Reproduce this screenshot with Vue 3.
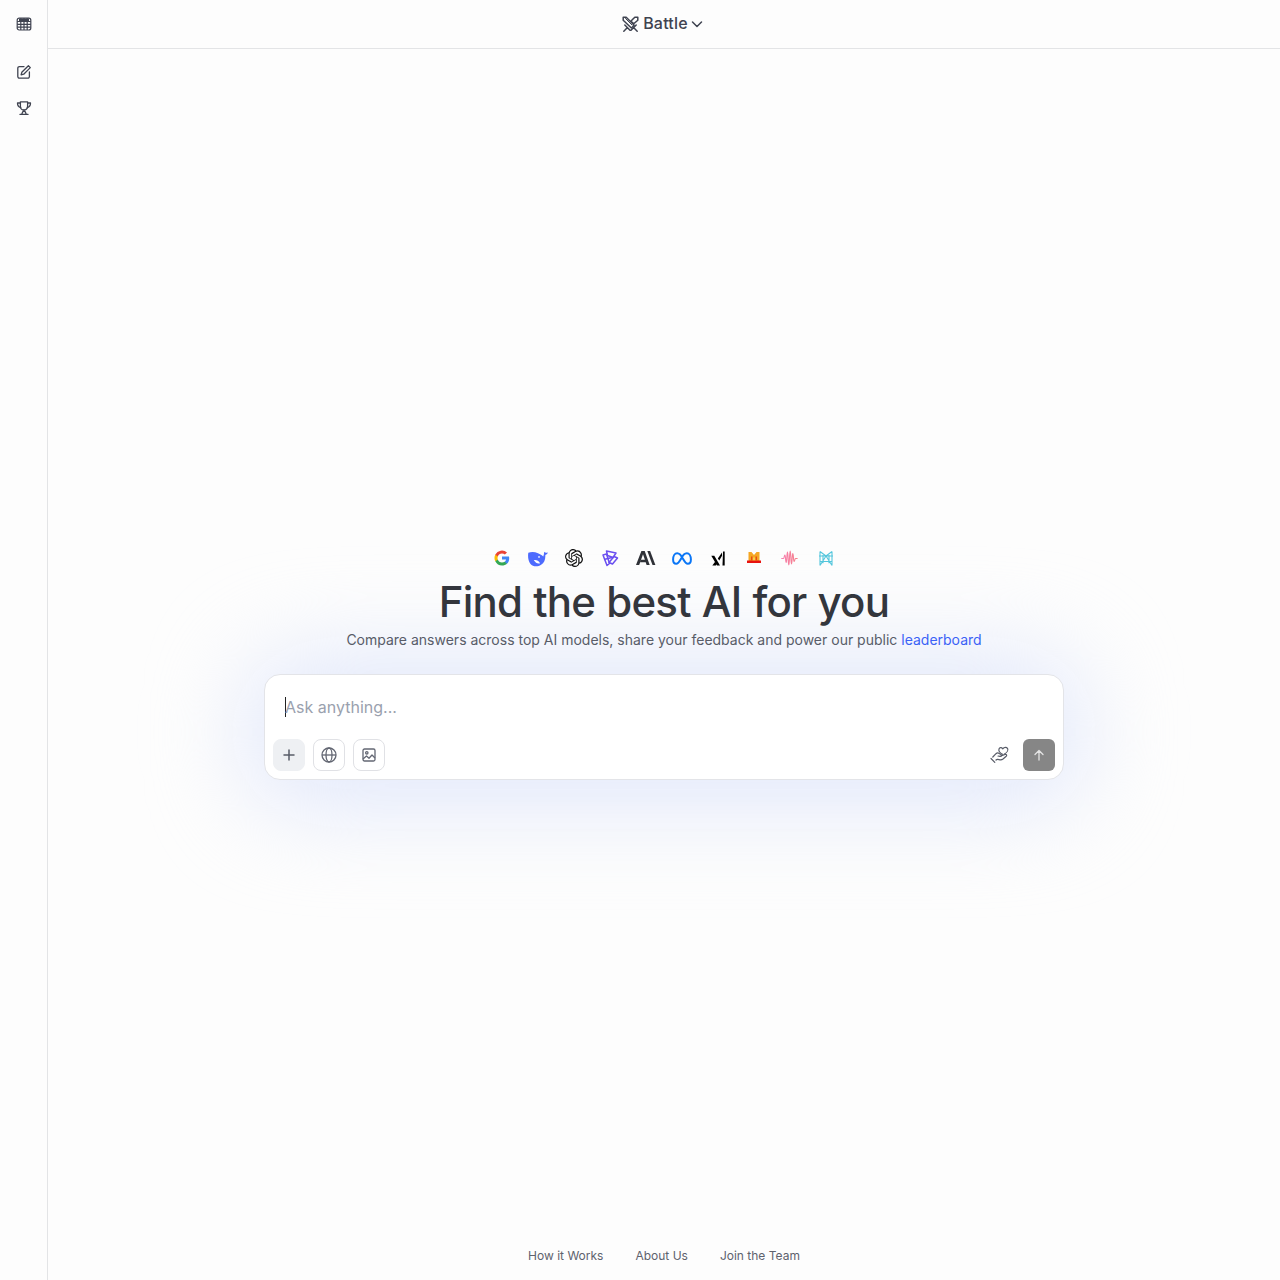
<script setup>
const links = ['How it Works', 'About Us', 'Join the Team']
</script>

<template>
  <div class="page">
    <aside class="side">
      <button class="side-btn top">
        <svg width="16" height="16" viewBox="0 0 16 16" fill="none" stroke="#3f4350" stroke-width="1.2">
          <rect x="1.2" y="2.2" width="13.6" height="11.8" rx="2" />
          <path d="M1.2 5.500h13.600M1.200 8.300h13.600M1.200 11.100h13.600M4.800 2.200V14M8 2.200V14M11.200 2.200V14" />
          <path d="M3 2.600h10v2.400H3z" fill="#3f4350" stroke="none" />
        </svg>
      </button>
      <div class="side-group">
        <button class="side-btn">
          <svg width="16" height="16" viewBox="0 0 16 16" fill="none" stroke="#3f4350" stroke-width="1.300" stroke-linecap="round" stroke-linejoin="round">
            <path d="M8 2.600H3.400a1.600 1.600 0 0 0-1.600 1.600v8.400a1.600 1.600 0 0 0 1.600 1.600h8.400a1.600 1.600 0 0 0 1.600-1.600V8" />
            <path d="M12.400 1.700l1.900 1.900-6.600 6.600-2.600.7.700-2.600z" />
          </svg>
        </button>
        <button class="side-btn">
          <svg width="16" height="16" viewBox="0 0 16 16" fill="none" stroke="#3f4350" stroke-width="1.300" stroke-linecap="round" stroke-linejoin="round">
            <path d="M4.400 1.800h7.200v4.600a3.600 3.600 0 0 1-7.200 0z" />
            <path d="M4.400 3H1.500c0 2.500 1 4 3.200 4.500M11.600 3h2.900c0 2.500-1 4-3.200 4.500" />
            <path d="M8 10v1.600M6.900 11.600l-1.200 2.600M9.100 11.600l1.200 2.600M4 14.400h8" />
          </svg>
        </button>
      </div>
    </aside>

    <div class="main">
      <header class="head">
        <div class="mode">
          <svg width="17" height="17" viewBox="0 0 17 17" fill="none" stroke="#3f4350" stroke-width="1.500" stroke-linecap="round" stroke-linejoin="round">
            <path d="M1.200 1.200h3l8 8-2.800 2.800-8.200-7.800z" />
            <path d="M15.800 1.200h-3L9 5l2.700 2.700 4.100-3.500z" />
            <path d="M2.800 9l5.200 5.200M14.200 9L9 14.200M5.200 11.800l-3.400 3.400M11.800 11.800l3.400 3.400" />
            <path d="M3.500 2.500l6.500 6.500" stroke-width="1" />
          </svg>
          <span class="mode-name">Battle</span>
          <svg width="12" height="12" viewBox="0 0 12 12" fill="none" stroke="#3f4350" stroke-width="1.500" stroke-linecap="round" stroke-linejoin="round">
            <path d="M1.500 4l4.500 4.500L10.500 4" />
          </svg>
        </div>
      </header>

      <main class="center">
        <div class="logos">
          <span class="logo">
            <svg width="16" height="16" viewBox="0 0 16 16">
              <path d="M15.200 8.200c0-.6-.1-1.100-.2-1.600H8v3h4.100a3.500 3.500 0 0 1-1.500 2.300v1.900H13c1.400-1.300 2.200-3.200 2.200-5.600z" fill="#4285f4" />
              <path d="M8 15.500c2 0 3.700-.7 5-1.800l-2.400-1.900c-.7.500-1.500.7-2.600.7-2 0-3.600-1.300-4.200-3.100H1.300v1.900a7.500 7.500 0 0 0 6.700 4.200z" fill="#34a853" />
              <path d="M3.800 9.400a4.500 4.500 0 0 1 0-2.900V4.600H1.300a7.500 7.500 0 0 0 0 6.700z" fill="#fbbc05" />
              <path d="M8 3.500c1.100 0 2.100.4 2.900 1.100L13 2.500A7.500 7.500 0 0 0 1.300 4.600l2.500 1.900C4.400 4.800 6 3.500 8 3.500z" fill="#ea4335" />
            </svg>
          </span>
          <span class="logo">
            <svg width="21" height="17" viewBox="0 0 20 16">
              <path d="M.3 2.500C3 1.500 6.500 1.500 9.500 3c2 1 3.800 1.800 5 3.200.6-1.500.9-3 .8-4.700.7.700 1.700 1 3.700.9-.4 1-1.100 1.800-2.500 2.300.2 4-1 7.300-4 9.300-3.300 2.200-7.800 2-10.300-1C.2 10.300-.3 6 .3 2.500z" fill="#4d6bfe" />
              <path d="M5.500 9.500c2.500-.5 4.500.5 6 3-1.800.6-4.300.2-6-3z" fill="#fff" />
              <circle cx="10.500" cy="6.500" r=".8" fill="#fff" />
            </svg>
          </span>
          <span class="logo">
            <svg width="18" height="18" viewBox="0 0 24 24" fill="#111">
              <path d="M22.2819 9.8211a5.9847 5.9847 0 0 0-.5157-4.9108 6.0462 6.0462 0 0 0-6.5098-2.9A6.0651 6.0651 0 0 0 4.9807 4.1818a5.9847 5.9847 0 0 0-3.9977 2.9 6.0462 6.0462 0 0 0 .7427 7.0966 5.98 5.98 0 0 0 .511 4.9107 6.051 6.051 0 0 0 6.5146 2.9001A5.9847 5.9847 0 0 0 13.2599 24a6.0557 6.0557 0 0 0 5.7718-4.2058 5.9894 5.9894 0 0 0 3.9977-2.9001 6.0557 6.0557 0 0 0-.7475-7.0729zm-9.022 12.6081a4.4755 4.4755 0 0 1-2.8764-1.0408l.1419-.0804 4.7783-2.7582a.7948.7948 0 0 0 .3927-.6813v-6.7369l2.02 1.1686a.071.071 0 0 1 .038.052v5.5826a4.504 4.504 0 0 1-4.4945 4.4944zm-9.6607-4.1254a4.4708 4.4708 0 0 1-.5346-3.0137l.142.0852 4.783 2.7582a.7712.7712 0 0 0 .7806 0l5.8428-3.3685v2.3324a.0804.0804 0 0 1-.0332.0615L9.74 19.9502a4.4992 4.4992 0 0 1-6.1408-1.6464zM2.3408 7.8956a4.485 4.485 0 0 1 2.3655-1.9728V11.6a.7664.7664 0 0 0 .3879.6765l5.8144 3.3543-2.0201 1.1685a.0757.0757 0 0 1-.071 0l-4.8303-2.7865A4.504 4.504 0 0 1 2.3408 7.872zm16.5963 3.8558L13.1038 8.364 15.1192 7.2a.0757.0757 0 0 1 .071 0l4.8303 2.7913a4.4944 4.4944 0 0 1-.6765 8.1042v-5.6772a.79.79 0 0 0-.407-.667zm2.0107-3.0231l-.142-.0852-4.7735-2.7818a.7759.7759 0 0 0-.7854 0L9.409 9.2297V6.8974a.0662.0662 0 0 1 .0284-.0615l4.8303-2.7866a4.4992 4.4992 0 0 1 6.6802 4.66zM8.3065 12.863l-2.02-1.1638a.0804.0804 0 0 1-.038-.0567V6.0742a4.4992 4.4992 0 0 1 7.3757-3.4537l-.142.0805L8.704 5.459a.7948.7948 0 0 0-.3927.6813zm1.0976-2.3654l2.602-1.4998 2.6069 1.4998v2.9994l-2.5974 1.4997-2.6067-1.4997Z" />
            </svg>
          </span>
          <span class="logo">
            <svg width="18" height="18" viewBox="0 0 18 18" fill="none" stroke="#6a4ff0" stroke-width="1.500" stroke-linejoin="round">
              <path d="M5.500 2l9.500 2-3 4.500-5.500-2z" />
              <path d="M2 6l3.500-1 3 9.500-2.500 2z" />
              <path d="M16.500 9l-5 6-3.500-1.500 5-6z" />
              <path d="M3 10.500l8-2" />
            </svg>
          </span>
          <span class="logo">
            <svg width="20" height="14" viewBox="0 0 20 14" fill="#2f3137">
              <path d="M5.400 0h3.300l5 14h-3.100l-.9-2.800H4.200l1-2.500h3.700L7 3.200 3.200 14H0z" />
              <path d="M11.300 0h2.800l5.300 14h-2.900z" />
            </svg>
          </span>
          <span class="logo">
            <svg width="20" height="13" viewBox="0 0 20 13" fill="none" stroke="#0a76f6" stroke-width="2">
              <path d="M5.200 1.200C2.800 1.200 1.100 4 1.100 7.500c0 2.600 1.200 4.300 3.100 4.300 1.700 0 2.900-1.500 4.700-4.700C10.600 3.400 12.300 1.200 14.800 1.200c2.400 0 4.100 2.800 4.100 6.300 0 2.600-1.300 4.300-3.100 4.300-1.700 0-2.900-1.500-4.700-4.700C9.300 3.400 7.600 1.200 5.200 1.200z" />
            </svg>
          </span>
          <span class="logo">
            <svg width="14" height="15" viewBox="0 0 14 15" fill="#000">
              <path d="M.3 4.800h3L9 14.500H6z" />
              <path d="M4.300 10.500l1.600 2.300-1 1.700H1.300z" />
              <path d="M6.800 7.500L11 1.500v3.300L8.300 9.500z" />
              <path d="M12 .5h1.700v14H11.500z" />
            </svg>
          </span>
          <span class="logo">
            <svg width="16" height="14" viewBox="0 0 16 14">
              <path d="M2.500 1h3L8 4l2.500-3h3v9h-11z" fill="#f5a623" />
              <path d="M6.500 6.500h3V10h-3z" fill="#f6d04d" />
              <path d="M1 9.500h14V12H1z" fill="#e8130f" />
              <path d="M5 5.500h1.500v4H5zM9.500 5.500H11v4H9.500z" fill="#e84c0f" />
            </svg>
          </span>
          <span class="logo">
            <svg width="18" height="16" viewBox="0 0 18 16" fill="none" stroke-width="1.100" stroke-linecap="round" stroke-linejoin="round">
              <defs>
                <linearGradient id="wave">
                  <stop offset="0" stop-color="#f77fb0" />
                  <stop offset="1" stop-color="#f5808a" />
                </linearGradient>
              </defs>
              <path stroke="url(#wave)" d="M.7 8.500h1.800c.8 0 .6-3.500 1.400-3.500s.5 7.500 1.300 7.500.5-10.500 1.300-10.500.5 13 1.300 13 .6-14 1.400-14 .5 13 1.300 13 .5-10.500 1.300-10.500.5 8 1.300 8 .6-3 1.400-3h1.700" />
            </svg>
          </span>
          <span class="logo">
            <svg width="16" height="17" viewBox="0 0 16 17" fill="none" stroke="#54c6dc" stroke-width="1.100">
              <path d="M2 1.500L8 6l6-4.500M1 6h14M2 15.500L8 6l6 9.500M2 1.500v14M14 1.500v14M2 11.500h12M5 3.800v9.500M11 3.800v9.500" />
            </svg>
          </span>
        </div>

        <h1 class="title">Find the best AI for you</h1>
        <p class="sub">Compare answers across top AI models, share your feedback and power our public <a class="board">leaderboard</a></p>

        <div class="composer">
          <div class="glow"></div>
          <div class="box">
            <div class="input-line"><span class="caret"></span><span class="placeholder">Ask anything...</span></div>
            <div class="tools">
              <div class="tools-left">
                <button class="tool plus">
                  <svg width="14" height="14" viewBox="0 0 14 14" fill="none" stroke="#585c68" stroke-width="1.500" stroke-linecap="round">
                    <path d="M7 2v10M2 7h10" />
                  </svg>
                </button>
                <button class="tool">
                  <svg width="16" height="16" viewBox="0 0 16 16" fill="none" stroke="#636773" stroke-width="1.300">
                    <circle cx="8" cy="8" r="7" />
                    <ellipse cx="8" cy="8" rx="3" ry="7" />
                    <path d="M1 8h14" />
                  </svg>
                </button>
                <button class="tool">
                  <svg width="14" height="14" viewBox="0 0 14 14" fill="none" stroke="#636773" stroke-width="1.300" stroke-linejoin="round">
                    <rect x="1" y="1" width="12" height="12" rx="1.500" />
                    <circle cx="4.800" cy="4.800" r="1.200" />
                    <path d="M1 11l3.500-3 2.500 2.200 3-3.200 3 3" />
                  </svg>
                </button>
              </div>
              <div class="tools-right">
                <svg width="20" height="20" viewBox="0 1 20 20" fill="none" stroke="#585c68" stroke-width="1.200" stroke-linecap="round" stroke-linejoin="round">
                  <path d="M13 10.500C9 8.500 8.500 6.500 9 5c.6-1.600 2.600-1.800 3.800-.2 1.400-1.800 3.800-1.800 4.800-.2.800 1.400-.6 3.900-3.100 5.400" />
                  <path d="M2.800 13L6 9.700c1-.9 2.200-.9 3.200-.3l1.800 1.100c1 .7.400 2.100-1 1.900l-2-.4" />
                  <path d="M11 12l4-1.500c1.400-.5 2.200.9 1.200 1.800L13 15c-1 .8-2 1-3 .8l-2.200-.4c-.8-.1-1.400.2-1.800.6" />
                  <path d="M1 14.500L4.800 18.300" />
                </svg>
                <button class="send">
                  <svg width="12" height="12" viewBox="0 0 12 12" fill="none" stroke="#e4e4e4" stroke-width="1.300" stroke-linecap="round" stroke-linejoin="round">
                    <path d="M6 11V1.500M2 5.500l4-4 4 4" />
                  </svg>
                </button>
              </div>
            </div>
          </div>
        </div>
      </main>

      <footer class="foot">
        <a v-for="l in links" :key="l">{{ l }}</a>
      </footer>
    </div>
  </div>
</template>

<style>
body {
  background: #fdfdfd;
}
</style>

<style scoped>
.page {
  display: flex;
  height: 1280px;
  font-family: Inter, "Liberation Sans", sans-serif;
  color: #33363d;
  overflow: hidden;
  isolation: isolate;
}
button {
  border: none;
  background: none;
  padding: 0;
  display: flex;
  align-items: center;
  justify-content: center;
}
.side {
  width: 47px;
  border-right: 1px solid #e3e4e6;
  display: flex;
  flex-direction: column;
  align-items: center;
  flex-shrink: 0;
}
.side-btn {
  width: 32px;
  height: 32px;
}
.side-btn.top {
  margin-top: 8px;
}
.side-group {
  margin-top: 16px;
  display: flex;
  flex-direction: column;
  gap: 4px;
}
.main {
  flex: 1;
  display: flex;
  flex-direction: column;
  min-width: 0;
}
.head {
  height: 48px;
  border-bottom: 1px solid #e3e4e6;
  display: flex;
  align-items: center;
  justify-content: center;
  box-sizing: content-box;
  flex-shrink: 0;
}
.mode {
  display: flex;
  align-items: center;
  gap: 4px;
  margin-left: -3px;
}
.mode-name {
  font-size: 16px;
  line-height: 20px;
  font-weight: 450;
  letter-spacing: 0.2px;
  color: #3f4350;
  margin-top: -3px;
  margin-right: -1px;
}
.center {
  flex: 1;
  display: flex;
  flex-direction: column;
  align-items: center;
  padding-top: 497px;
}
.logos {
  display: flex;
  gap: 12px;
  height: 24px;
}
.logo {
  width: 24px;
  height: 24px;
  display: flex;
  align-items: center;
  justify-content: center;
}
.title {
  margin: 0;
  font-size: 42px;
  line-height: 56px;
  font-weight: 450;
  letter-spacing: -0.75px;
  word-spacing: 0.5px;
  color: #33363d;
  margin-top: 4px;
}
.sub {
  margin: 0;
  font-size: 14px;
  line-height: 20px;
  color: #585c68;
}
.board {
  color: #3b62f6;
}
.composer {
  position: relative;
  width: 800px;
  margin-top: 24px;
}
.glow {
  position: absolute;
  z-index: -1;
  left: -20px;
  right: -20px;
  top: -20px;
  bottom: -30px;
  background: #e3e9fb;
  filter: blur(45px);
  border-radius: 60px;
}
.box {
  background: #fff;
  border: 1px solid #e3e4e8;
  border-radius: 16px;
  height: 106px;
  box-sizing: border-box;
  padding: 20px 8px 8px;
  display: flex;
  flex-direction: column;
  justify-content: space-between;
}
.input-line {
  display: flex;
  align-items: center;
  padding-left: 12px;
  height: 24px;
  font-size: 16px;
}
.caret {
  width: 1px;
  height: 20px;
  background: #222;
  margin-right: -1px;
}
.placeholder {
  color: #9aa1ae;
}
.tools {
  display: flex;
  justify-content: space-between;
  align-items: center;
}
.tools-left {
  display: flex;
  gap: 8px;
}
.tool {
  width: 32px;
  height: 32px;
  border: 1px solid #e0e1e5;
  border-radius: 8px;
  background: #fff;
  box-sizing: border-box;
}
.tool.plus {
  background: #eef0f3;
  border-color: #eef0f3;
}
.tools-right {
  display: flex;
  align-items: center;
  gap: 13px;
}
.send {
  width: 32px;
  height: 32px;
  border-radius: 6px;
  background: #868686;
}
.foot {
  display: flex;
  justify-content: center;
  gap: 32px;
  height: 48px;
  font-size: 12px;
  line-height: 48px;
  color: #5e626d;
  flex-shrink: 0;
}
</style>
